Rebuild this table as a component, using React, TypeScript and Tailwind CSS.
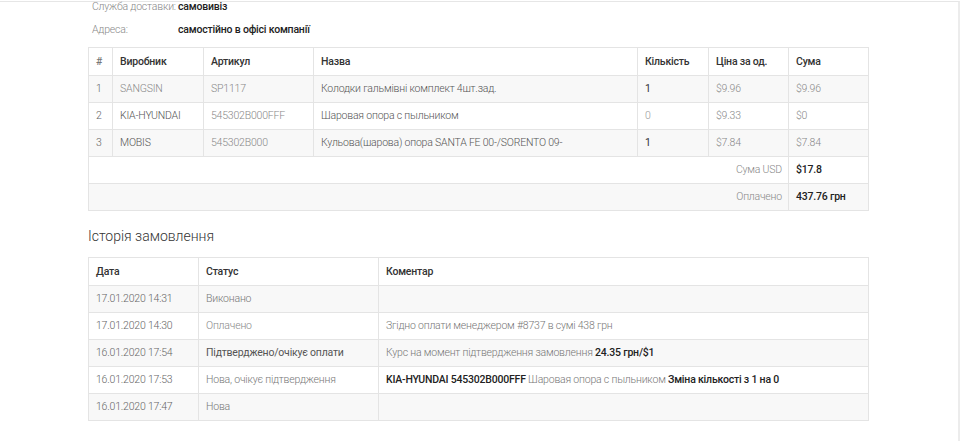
import React from "react";

const font = { fontFamily: "Roboto, 'Noto Sans', Arial, sans-serif" };

type Item = { n: string; maker: string; makerDark?: boolean; art: string; name: string; qty: string; qtyDark: boolean; price: string; sum: string };

const items: Item[] = [
  { n: "1", maker: "SANGSIN", art: "SP1117", name: "Колодки гальмівні комплект 4шт.зад.", qty: "1", qtyDark: true, price: "$9.96", sum: "$9.96" },
  { n: "2", maker: "KIA-HYUNDAI", makerDark: true, art: "545302B000FFF", name: "Шаровая опора с пыльником", qty: "0", qtyDark: false, price: "$9.33", sum: "$0" },
  { n: "3", maker: "MOBIS", makerDark: true, art: "545302B000", name: "Кульова(шарова) опора SANTA FE 00-/SORENTO 09-", qty: "1", qtyDark: true, price: "$7.84", sum: "$7.84" },
];

const td = "border border-[#e4e4e4] px-[7px] h-[27px] align-middle whitespace-nowrap";
const th = "border border-[#e4e4e4] px-[7px] h-[28px] align-middle text-left font-medium text-[#333] whitespace-nowrap";

export default function App() {
  return (
    <div style={font} className="w-[960px] h-[441px] overflow-hidden bg-white text-[10.5px] tracking-[-0.2px] relative">
      <div className="h-[441px] border-t border-[#e6e6e6] border-r-2 border-r-[#ececec] mt-[1px] w-[960px]">
        <div className="pl-[88px] w-[868px]">
          <div className="grid grid-cols-[86px_1fr] pl-[4px] whitespace-nowrap">
            <div className="h-[12px] leading-[12px] -mt-[1px] text-[#888] font-light">Служба доставки:</div>
            <div className="h-[12px] leading-[12px] -mt-[1px] text-[#222] font-medium">самовивіз</div>
            <div className="h-[12px] leading-[12px] mt-[11px] text-[#888] font-light">Адреса:</div>
            <div className="h-[12px] leading-[12px] mt-[11px] text-[#222] font-medium">самостійно в офісі компанії</div>
          </div>

          <table className="mt-[11px] w-[780px] border-collapse table-fixed">
            <colgroup>
              <col className="w-[24px]" />
              <col className="w-[91px]" />
              <col className="w-[110px]" />
              <col className="w-[324px]" />
              <col className="w-[71px]" />
              <col className="w-[80px]" />
              <col className="w-[80px]" />
            </colgroup>
            <thead>
              <tr>
                <th className={th + " font-light text-[#777]"}>#</th>
                <th className={th}>Виробник</th>
                <th className={th}>Артикул</th>
                <th className={th}>Назва</th>
                <th className={th}>Кількість</th>
                <th className={th}>Ціна за од.</th>
                <th className={th}>Сума</th>
              </tr>
            </thead>
            <tbody>
              {items.map((it, i) => (
                <tr key={it.n} className={i % 2 === 0 ? "bg-[#f8f8f8]" : "bg-white"}>
                  <td className={td + " text-[#666] font-light"}>{it.n}</td>
                  <td className={td + (it.makerDark ? " text-[#555] font-light" : " text-[#888] font-light")}>{it.maker}</td>
                  <td className={td + " text-[#888] font-light"}>{it.art}</td>
                  <td className={td + " text-[#555] font-light"}>{it.name}</td>
                  <td className={td + (it.qtyDark ? " text-[#333]" : " text-[#999] font-light")}>{it.qty}</td>
                  <td className={td + " text-[#888] font-light"}>{it.price}</td>
                  <td className={td + " text-[#888] font-light"}>{it.sum}</td>
                </tr>
              ))}
              <tr className="bg-white">
                <td colSpan={6} className={td + " text-right text-[#888] font-light pr-[6px]"}>Сума USD</td>
                <td className={td + " text-[#222] font-medium"}>$17.8</td>
              </tr>
              <tr className="bg-[#f8f8f8]">
                <td colSpan={6} className={td + " text-right text-[#888] font-light pr-[6px]"}>Оплачено</td>
                <td className={td + " text-[#222] font-medium"}>437.76 грн</td>
              </tr>
            </tbody>
          </table>

          <h2 className="mt-[15px] text-[14px] leading-[20px] font-light text-[#333] tracking-normal">Історія замовлення</h2>

          <table className="mt-[11px] w-[780px] border-collapse table-fixed">
            <colgroup>
              <col className="w-[110px]" />
              <col className="w-[180px]" />
              <col className="w-[490px]" />
            </colgroup>
            <thead>
              <tr>
                <th className={th + " h-[27px]"}>Дата</th>
                <th className={th + " h-[27px]"}>Статус</th>
                <th className={th + " h-[27px]"}>Коментар</th>
              </tr>
            </thead>
            <tbody>
              <tr className="bg-[#f8f8f8]">
                <td className={td + " text-[#666] font-light"}>17.01.2020 14:31</td>
                <td className={td + " text-[#777] font-light"}>Виконано</td>
                <td className={td}></td>
              </tr>
              <tr className="bg-white">
                <td className={td + " text-[#666] font-light"}>17.01.2020 14:30</td>
                <td className={td + " text-[#888] font-light"}>Оплачено</td>
                <td className={td + " text-[#777] font-light"}>Згідно оплати менеджером #8737 в сумі 438 грн</td>
              </tr>
              <tr className="bg-[#f8f8f8]">
                <td className={td + " text-[#666] font-light"}>16.01.2020 17:54</td>
                <td className={td + " text-[#555]"}>Підтверджено/очікує оплати</td>
                <td className={td + " text-[#777] font-light"}>
                  Курс на момент підтвердження замовлення <span className="text-[#222] font-medium">24.35 грн/$1</span>
                </td>
              </tr>
              <tr className="bg-white">
                <td className={td + " text-[#666] font-light"}>16.01.2020 17:53</td>
                <td className={td + " text-[#777] font-light"}>Нова, очікує підтвердження</td>
                <td className={td + " text-[#777] font-light"}>
                  <span className="text-[#222] font-medium">KIA-HYUNDAI 545302B000FFF</span> Шаровая опора с пыльником{" "}
                  <span className="text-[#222] font-medium">Зміна кількості з 1 на 0</span>
                </td>
              </tr>
              <tr className="bg-[#f8f8f8]">
                <td className={td + " text-[#666] font-light"}>16.01.2020 17:47</td>
                <td className={td + " text-[#777] font-light"}>Нова</td>
                <td className={td}></td>
              </tr>
            </tbody>
          </table>
        </div>
      </div>
    </div>
  );
}
